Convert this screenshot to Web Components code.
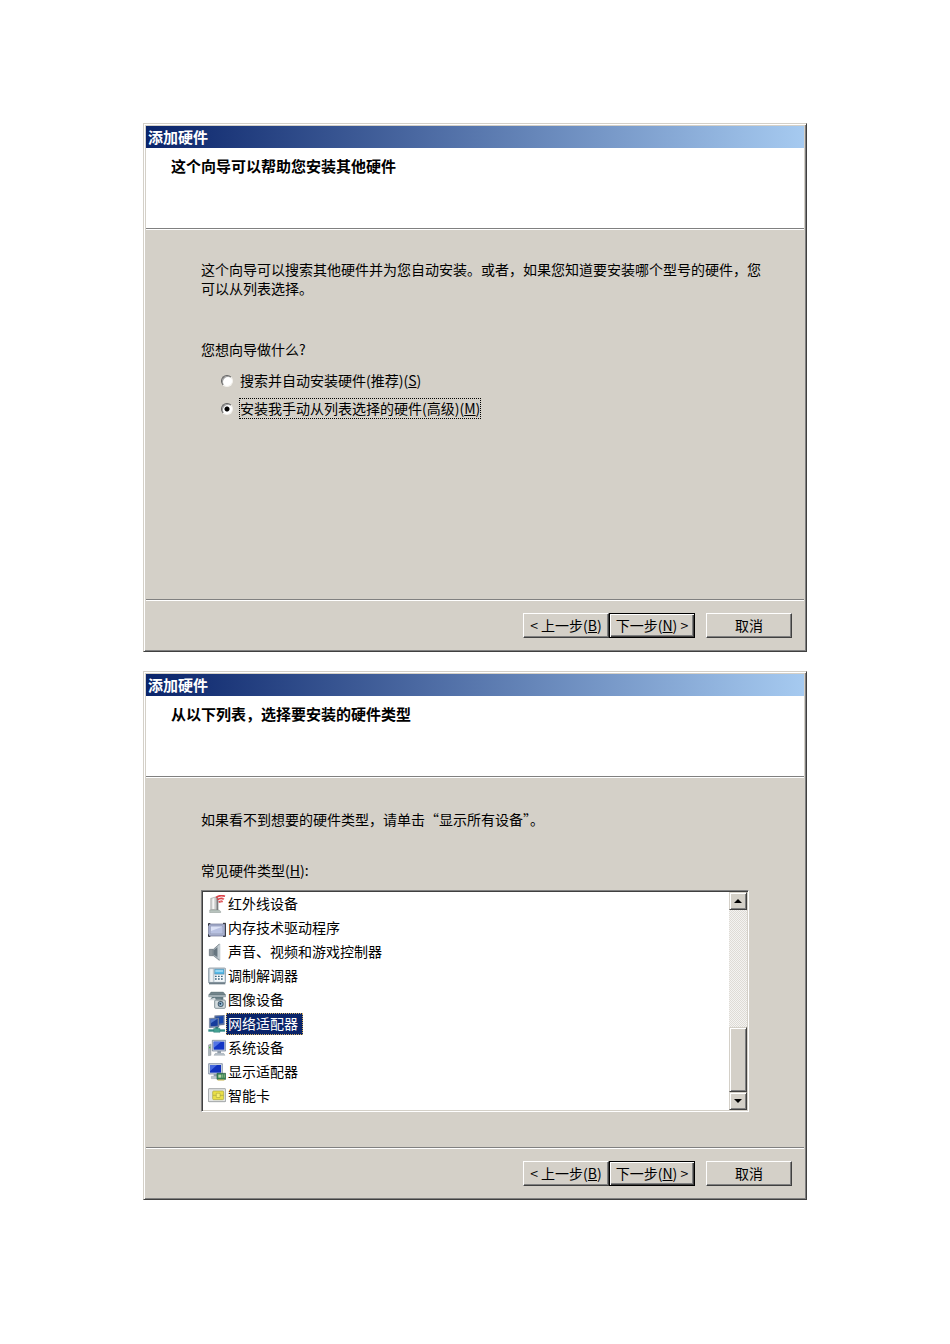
<!DOCTYPE html>
<html lang="zh-CN">
<head>
  <meta charset="utf-8">
  <title>添加硬件</title>
  <style>
    body {
      margin: 0;
      padding: 123px 143px;
      background: #fff;
      color: #000;
      font-family: "Noto Sans CJK SC", sans-serif;
      font-size: 14px;
      line-height: 19px;
    }

    main {
      display: flex;
      flex-direction: column;
      gap: 19px;
    }
  </style>
</head>
<body>
  <main>
    <wizard-window heading="这个向导可以帮助您安装其他硬件">
      <wizard-intro></wizard-intro>
    </wizard-window>
    <wizard-window heading="从以下列表，选择要安装的硬件类型">
      <hardware-types></hardware-types>
    </wizard-window>
  </main>

  <script>
    class WizardButton extends HTMLElement {
      constructor() {
        super();
        this._shadowRoot = this.attachShadow({mode: 'open'});
      }

      connectedCallback() {
        this._shadowRoot.innerHTML = `
          <style>
            :host {
              display: block;
              width: 86px;
            }

            button {
              box-sizing: border-box;
              display: block;
              width: 100%;
              height: 25px;
              padding: 0;
              border: 1px solid;
              border-color: #fff #404040 #404040 #fff;
              border-radius: 0;
              background: #d4d0c8;
              box-shadow: inset -1px -1px #808080;
              color: #000;
              font: inherit;
              white-space: pre;
            }

            :host([default]) button {
              border-color: #000;
              box-shadow: inset 1px 1px #fff, inset -1px -1px #404040, inset -2px -2px #808080;
            }
          </style>
          <button type="button"><slot></slot></button>
        `;
      }
    }
    customElements.define('wizard-button', WizardButton);

    class WizardWindow extends HTMLElement {
      constructor() {
        super();
        this._shadowRoot = this.attachShadow({mode: 'open'});
      }

      connectedCallback() {
        this._shadowRoot.innerHTML = `
          <style>
            :host {
              display: block;
              padding: 1px;
              border: 1px solid;
              border-color: #d4d0c8 #404040 #404040 #d4d0c8;
              background: #d4d0c8;
              box-shadow: inset 1px 1px #fff, inset -1px -1px #808080;
            }

            .frame {
              padding: 1px;
            }

            .title {
              padding: 0 2px 1px;
              background: linear-gradient(to right, #0a246a, #a6caf0);
              color: #fff;
              font-size: 15px;
              font-weight: bold;
              line-height: 21px;
            }

            header {
              box-sizing: border-box;
              min-height: 80px;
              padding: 7px 25px;
              background: #fff;
            }

            h1 {
              margin: 0;
              font-size: 15px;
              line-height: 22px;
            }

            .rule {
              height: 1px;
              border-top: 1px solid #808080;
              background: #fff;
            }

            .content {
              box-sizing: border-box;
              min-height: 369px;
              padding: 30px 40px 0 55px;
            }

            footer {
              display: flex;
              justify-content: flex-end;
              padding: 12px 12px 11px;
            }

            .cancel {
              margin-left: 11px;
            }
          </style>
          <section class="frame">
            <div class="title">添加硬件</div>
            <header><h1>${this.getAttribute('heading')}</h1></header>
            <div class="rule"></div>
            <div class="content"><slot></slot></div>
            <div class="rule"></div>
            <footer>
              <wizard-button>&lt; 上一步(<u>B</u>)</wizard-button>
              <wizard-button default>下一步(<u>N</u>) &gt;</wizard-button>
              <wizard-button class="cancel">取消</wizard-button>
            </footer>
          </section>
        `;
      }
    }
    customElements.define('wizard-window', WizardWindow);

    class WizardIntro extends HTMLElement {
      constructor() {
        super();
        this._shadowRoot = this.attachShadow({mode: 'open'});
      }

      connectedCallback() {
        this._shadowRoot.innerHTML = `
          <style>
            :host {
              display: block;
            }

            p {
              margin: 0;
            }

            fieldset {
              display: flex;
              flex-direction: column;
              align-items: flex-start;
              gap: 7px;
              margin: 42px 0 0;
              padding: 0;
              border: 0;
            }

            legend {
              padding: 0 0 11px;
            }

            .choice {
              display: flex;
              align-items: center;
              gap: 6px;
              padding-left: 20px;
            }

            input {
              appearance: none;
              box-sizing: border-box;
              width: 12px;
              height: 12px;
              margin: 0;
              border: 1px solid;
              border-color: #606060 #f4f2ee #f4f2ee #606060;
              border-radius: 50%;
              background: #fff;
              box-shadow: inset 1px 1px #a0a0a0;
            }

            input:checked {
              background: radial-gradient(circle, #000 2px, #fff 3px);
            }

            label {
              border: 1px dotted transparent;
            }

            input:checked + label {
              border-color: #000;
            }
          </style>
          <p>这个向导可以搜索其他硬件并为您自动安装。或者，如果您知道要安装哪个型号的硬件，您可以从列表选择。</p>
          <fieldset>
            <legend>您想向导做什么?</legend>
            <div class="choice">
              <input type="radio" name="mode" id="search">
              <label for="search">搜索并自动安装硬件(推荐)(<u>S</u>)</label>
            </div>
            <div class="choice">
              <input type="radio" name="mode" id="manual" checked>
              <label for="manual">安装我手动从列表选择的硬件(高级)(<u>M</u>)</label>
            </div>
          </fieldset>
        `;
      }
    }
    customElements.define('wizard-intro', WizardIntro);

    // Device pictures, drawn on a 54 x 54 grid
    const ICONS = {
      infrared: `
        <path d="M8 10l18-5v40H8z" fill="#c9cbca" stroke="#777"/>
        <path d="M13 11l6-2v33h-6z" fill="#f5f5f5"/>
        <path d="M26 5l5 4v39l-5-3z" fill="#787b7c"/>
        <path d="M5 45h28l5 4v4H5z" fill="#b8c3be" stroke="#77817b"/>
        <path d="M24 8q12-10 27-4M28 15q9-8 20-3M32 22q6-5 12-2" fill="none" stroke="#dc4249" stroke-width="5"/>
        <path d="M35 24l12-15" stroke="#e98a8d" stroke-width="3"/>`,
      memory: `
        <path d="M1 15h50v36H1z" fill="#a9b1cf" stroke="#676e8b" stroke-width="2"/>
        <path d="M7 21h37v23H7z" fill="#dce2f6" stroke="#8790b1" stroke-width="2"/>
        <path d="M9 36l34-13v20H9z" fill="#b9c2e2"/>
        <path d="M45 13h8v39h-8M1 46v6h6M1 20v-6h6" fill="none" stroke="#22242d" stroke-width="3"/>`,
      sound: `
        <path d="M4 19h12v19H4z" fill="#8c969c" stroke="#606c74" stroke-width="2"/>
        <path d="M16 19L34 3v49L16 38z" fill="#a9b5bd" stroke="#68747c" stroke-width="2"/>
        <path d="M29 10l8-8v50l-8-7z" fill="#c4cdd2"/>
        <path d="M17 22l11-9v29l-11-7z" fill="#66757f"/>`,
      modem: `
        <rect x="1" y="3" width="52" height="45" rx="4" fill="#c8d6df" stroke="#71808b" stroke-width="2"/>
        <path d="M5 5h11v41H5z" fill="#eff3f5" stroke="#82919b"/>
        <path d="M20 7h28v14H20z" fill="#55b9e7" stroke="#3b7190"/>
        <path d="M20 24h29v20H20z" fill="#f4f8fa"/>
        <path d="M21 26h5v4h-5zm9 0h5v4h-5zm9 0h5v4h-5zM21 34h5v4h-5zm9 0h5v4h-5zm9 0h5v4h-5z" fill="#3d6680"/>
        <path d="M3 46h49v6H3z" fill="#6f7f89"/>
        <path d="M22 12h23" stroke="#d7f3ff" stroke-width="3"/>`,
      imaging: `
        <path d="M9 3h37l7 9H2z" fill="#73858c" stroke="#4c6065"/>
        <path d="M2 12h51v6H2z" fill="#aebbc0" stroke="#65777d"/>
        <path d="M12 18h34v8H6z" fill="#627981"/>
        <path d="M4 25l16-5 7 8H4z" fill="#d4dadd"/>
        <rect x="20" y="27" width="32" height="25" rx="3" fill="#d5dde0" stroke="#536870" stroke-width="2"/>
        <path d="M26 23h13v5H26z" fill="#84949b"/>
        <circle cx="38" cy="39" r="9" fill="#475e6c"/>
        <circle cx="38" cy="39" r="6" fill="#9cc2dc"/>
        <circle cx="37" cy="38" r="3" fill="#203c59"/>`,
      network: `
        <path d="M20 2l29-2v29l-29 3z" fill="#697da4" stroke="#394867"/>
        <path d="M23 5l23-2v22l-23 3z" fill="#1747ad"/>
        <path d="M4 10l29-2v28L4 38z" fill="#7589ac" stroke="#394867"/>
        <path d="M8 13l21-2v21L8 34z" fill="#153c9c"/>
        <path d="M8 13l21-2L8 25z" fill="#4f77cb"/>
        <path d="M22 36h9v8h-9z" fill="#31797b"/>
        <path d="M1 43h50v7H1z" fill="#318c87"/>
        <path d="M17 40h19v12H17z" fill="#44a292" stroke="#216b6b"/>`,
      system: `
        <path d="M1 18l8-3v34l-8 1z" fill="#aeb7bd" stroke="#6d777d"/>
        <path d="M3 23h4v5H3z" fill="#53b648"/>
        <path d="M13 4h40v32H13z" fill="#cbd4e1" stroke="#65748c" stroke-width="2"/>
        <path d="M17 8h32v24H17z" fill="#1335c5"/>
        <path d="M17 8h22L17 27z" fill="#5274e5"/>
        <path d="M28 36h11v7H28z" fill="#8f9ca9"/>
        <path d="M22 43h25l4 6H18z" fill="#b6c1cb" stroke="#7c8891"/>`,
      display: `
        <path d="M2 2h41v31H2z" fill="#d0d9e5" stroke="#65748c" stroke-width="2"/>
        <path d="M6 6h33v23H6z" fill="#1032bd"/>
        <path d="M6 6h21L6 25z" fill="#4669df"/>
        <path d="M17 33h11v7H17z" fill="#8d9dab"/>
        <path d="M10 40h24v7H10z" fill="#bdc7cf" stroke="#798690"/>
        <path d="M27 31h26v18H27z" fill="#378657" stroke="#245a3b" stroke-width="2"/>
        <path d="M31 35h9v9h-9z" fill="#b9d3a6"/>
        <path d="M44 34v10M49 34v10" stroke="#acce91" stroke-width="2"/>
        <path d="M29 51h20" stroke="#c3af43" stroke-width="3"/>`,
      smartcard: `
        <rect x="1" y="5" width="52" height="39" rx="2" fill="#e3e6e7" stroke="#7a8083" stroke-width="2"/>
        <rect x="14" y="12" width="33" height="26" rx="3" fill="#eadf46" stroke="#a8a33c" stroke-width="2"/>
        <path d="M15 25h32M25 19h11v12H25z" fill="none" stroke="#a5a149" stroke-width="2"/>
        <path d="M26 20h9v10h-9z" fill="#f7ef73"/>`
    };

    const TYPES = [
      ['infrared', '红外线设备'],
      ['memory', '内存技术驱动程序'],
      ['sound', '声音、视频和游戏控制器'],
      ['modem', '调制解调器'],
      ['imaging', '图像设备'],
      ['network', '网络适配器'],
      ['system', '系统设备'],
      ['display', '显示适配器'],
      ['smartcard', '智能卡']
    ];

    class ClassicScrollbar extends HTMLElement {
      constructor() {
        super();
        this._shadowRoot = this.attachShadow({mode: 'open'});
      }

      connectedCallback() {
        this._shadowRoot.innerHTML = `
          <style>
            :host {
              display: flex;
              flex-direction: column;
              width: 18px;
            }

            button, .thumb {
              box-sizing: border-box;
              border: 1px solid;
              border-color: #d4d0c8 #404040 #404040 #d4d0c8;
              background: #d4d0c8;
              box-shadow: inset 1px 1px #fff, inset -1px -1px #808080;
            }

            button {
              display: flex;
              align-items: center;
              justify-content: center;
              width: 18px;
              height: 18px;
              padding: 0;
              border-radius: 0;
            }

            .track {
              flex: 1;
              background: repeating-conic-gradient(#dedbd5 0 25%, #f4f3f1 0 50%) 0 0 / 2px 2px;
            }

            .thumb {
              height: 65px;
            }
          </style>
          <button type="button" aria-label="向上滚动">
            <svg width="8" height="4" viewBox="0 0 8 4" aria-hidden="true"><path d="M0 4L4 0l4 4z"/></svg>
          </button>
          <div class="track"></div>
          <div class="thumb"></div>
          <button type="button" aria-label="向下滚动">
            <svg width="8" height="4" viewBox="0 0 8 4" aria-hidden="true"><path d="M0 0l4 4 4-4z"/></svg>
          </button>
        `;
      }
    }
    customElements.define('classic-scrollbar', ClassicScrollbar);

    class HardwareTypes extends HTMLElement {
      constructor() {
        super();
        this._shadowRoot = this.attachShadow({mode: 'open'});
      }

      connectedCallback() {
        this._shadowRoot.innerHTML = `
          <style>
            :host {
              display: block;
              padding-top: 2px;
            }

            p {
              margin: 0;
            }

            .caption {
              margin: 32px 0 10px;
            }

            .list {
              display: flex;
              margin-right: 15px;
              border: 1px solid;
              border-color: #808080 #fff #fff #808080;
              background: #fff;
              box-shadow: inset 1px 1px #404040, inset -1px -1px #d4d0c8;
              padding: 1px;
            }

            ul {
              flex: 1;
              margin: 0;
              padding: 0 0 2px 5px;
              list-style: none;
            }

            li {
              display: flex;
              align-items: center;
              height: 24px;
            }

            li svg {
              flex: none;
            }

            li span {
              padding: 0 4px 1px 1px;
              border: 1px dotted transparent;
            }

            li[aria-selected="true"] span {
              border-color: #d4b060;
              background: #0a246a;
              color: #fff;
            }
          </style>
          <p>如果看不到想要的硬件类型，请单击“显示所有设备”。</p>
          <p class="caption" id="caption">常见硬件类型(<u>H</u>):</p>
          <div class="list">
            <ul role="listbox" tabindex="0" aria-labelledby="caption">
              ${TYPES.map(([icon, name]) => `
                <li role="option" aria-selected="${icon === 'network'}">
                  <svg width="18" height="18" viewBox="0 0 54 54" aria-hidden="true">${ICONS[icon]}</svg>
                  <span>${name}</span>
                </li>
              `).join('')}
            </ul>
            <classic-scrollbar></classic-scrollbar>
          </div>
        `;
      }
    }
    customElements.define('hardware-types', HardwareTypes);
  </script>
</body>
</html>
